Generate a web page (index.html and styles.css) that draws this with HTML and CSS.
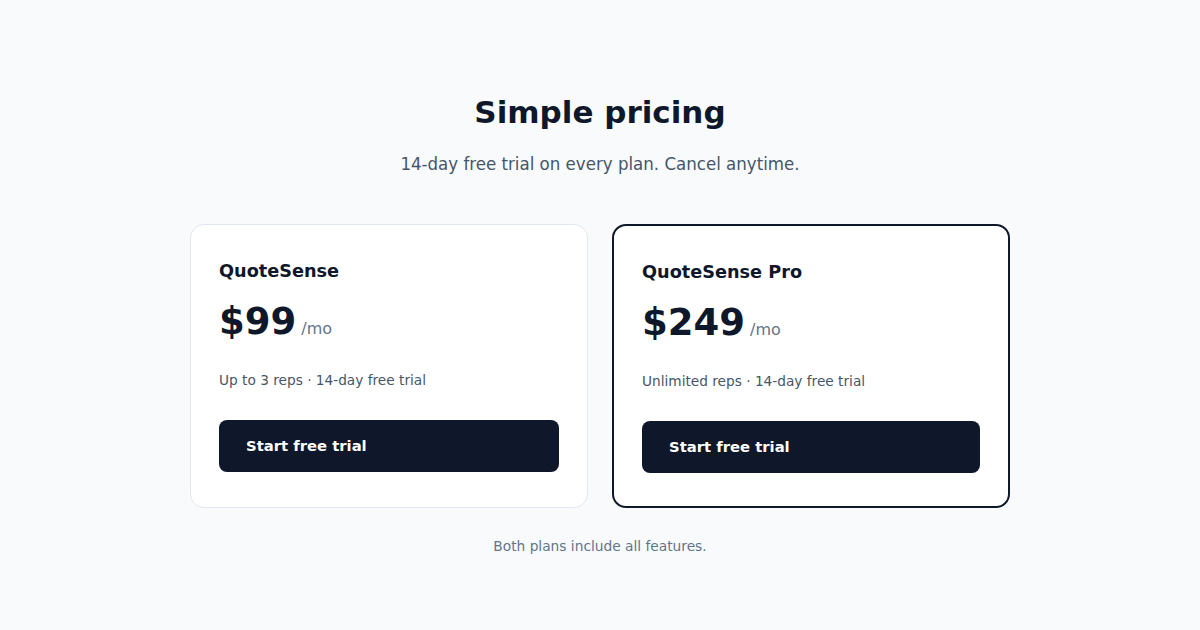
FILE: index.html
```html
<!DOCTYPE html>
<html lang="en">
<head>
    <meta charset="UTF-8">
    <meta name="viewport" content="width=device-width, initial-scale=1.0">
    <title>Pricing</title>
    <link rel="stylesheet" href="styles.css">
</head>
<body>

    <main class="pricing">
        <h1 class="title">Simple pricing</h1>
        <p class="subtitle">14-day free trial on every plan. Cancel anytime.</p>

        <!-- two plan cards, the second one is highlighted -->
        <div class="plans">
            <div class="plan">
                <h2 class="plan-name">QuoteSense</h2>
                <div class="price">
                    <span class="amount">$99</span>
                    <span class="period">/mo</span>
                </div>
                <p class="plan-note">Up to 3 reps · 14-day free trial</p>
                <a class="trial-btn" href="#">Start free trial</a>
            </div>

            <div class="plan plan-featured">
                <h2 class="plan-name">QuoteSense Pro</h2>
                <div class="price">
                    <span class="amount">$249</span>
                    <span class="period">/mo</span>
                </div>
                <p class="plan-note">Unlimited reps · 14-day free trial</p>
                <a class="trial-btn" href="#">Start free trial</a>
            </div>
        </div>

        <p class="footnote">Both plans include all features.</p>
    </main>

</body>
</html>
```

FILE: styles.css
```css
* { box-sizing: border-box; }

body
{
    margin: 0; background-color: #f8fafc; color: #0f172a;
    font-family: "DejaVu Sans", "Liberation Sans", sans-serif;
}

.pricing
{
    display: flex; flex-direction: column; align-items: center;
    padding-top: 90px;
}

.title
{
    margin: 0; font-size: 31px; font-weight: bold; line-height: 44px;
}

.subtitle
{
    margin: 16px 0 0; font-size: 18.5px; color: #475569; line-height: 28px;
    font-family: "DejaVu Sans Condensed", "DejaVu Sans", sans-serif;
}

.plans
{
    display: grid; grid-template-columns: 398px 398px; gap: 24px;
    margin-top: 46px;
}

.plan
{
    display: flex; flex-direction: column; align-items: flex-start;
    background-color: #ffffff; border: 1px solid #e2e8f0; border-radius: 14px;
    padding: 28px 28px 33px;
}

.plan-featured { border: 2px solid #0f172a; }

.plan-name
{
    margin: 4px 0 0; font-size: 17.7px; font-weight: bold; line-height: 28px;
}

.price
{
    display: flex; align-items: baseline; gap: 5px; margin-top: 13px;
}

.amount { font-size: 37px; font-weight: bold; line-height: 48px; }

.period { font-size: 16px; color: #64748b; }

.plan-note
{
    margin: 24px 0 0; font-size: 13.7px; color: #475569; line-height: 20px;
}

.trial-btn
{
    display: block; width: 100%; margin-top: 30px;
    background-color: #0f172a; color: #ffffff; border-radius: 8px;
    padding: 14px 27px; font-size: 14.8px; font-weight: bold; line-height: 24px;
    text-decoration: none;
}

.footnote
{
    margin: 28px 0 0; font-size: 13.75px; color: #64748b; line-height: 20px;
}
```
